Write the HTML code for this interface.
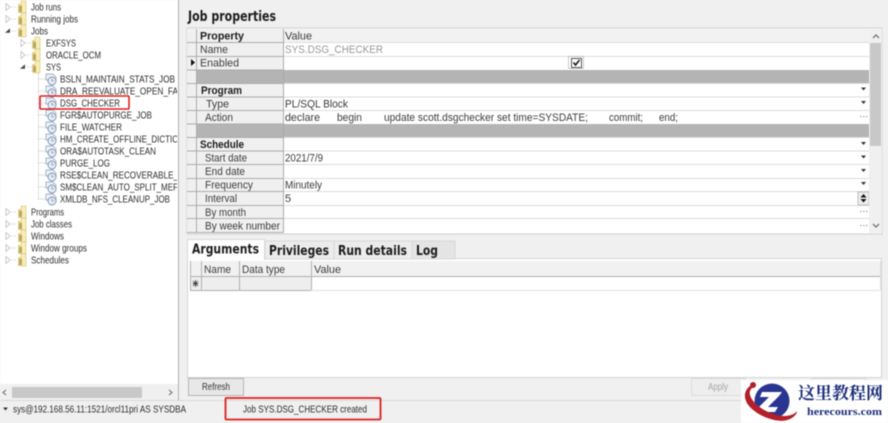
<!DOCTYPE html>
<html><head><meta charset="utf-8"><title>Job properties</title>
<style>
html,body{margin:0;padding:0;width:888px;height:423px;overflow:hidden;background:#f0f0f0}
svg{display:block;position:absolute;left:0;top:0}
text{font-family:"Liberation Sans",sans-serif;fill:#2c2c2c;font-size:10.5px}
.g text{font-size:11px;fill:#3c3c3c}
.b{font-weight:bold;fill:#1c1c1c!important}
.t{font-family:"DejaVu Sans",sans-serif;font-weight:bold;font-size:13px;fill:#1c1c1c}
</style></head><body>
<svg width="888" height="423" viewBox="0 0 888 423" xmlns="http://www.w3.org/2000/svg" style="filter:blur(.4px)">
<defs>
<clipPath id="tc"><rect x="0" y="0" width="177" height="384"/></clipPath>
<g id="fold"><path d="M-4-3h8v9h-8z" fill="#e6d587"/><path d="M-1-6h5v12h-5z" fill="#f6edb8" stroke="#cdb964" stroke-width=".5"/><path d="M-3-1h3v6h-3z" fill="#b9a765"/></g>
<g id="clock"><path d="M-5-5h7l3 3v3h-10z" fill="#eef2f8" stroke="#8a9bb5" stroke-width=".7"/><circle cx="1" cy="2" r="4" fill="#e6edf6" stroke="#7d92b0" stroke-width=".9"/><path d="M1-.5v2.500h2" fill="none" stroke="#5b7292" stroke-width=".6"/></g>
<path id="ar" d="M-2-3.500l4 3.500l-4 3.500z" fill="#fff" stroke="#b4b4b4" stroke-width=".7"/>
<path id="ex" d="M-3 1.800l5-4.400v4.400z" fill="#444"/>
<path id="dd" d="M-2.500-1h5l-2.500 3z" fill="#333"/>
</defs>

<rect width="888" height="423" fill="#f0f0f0"/>
<!-- tree -->
<rect x="0" y="0" width="178" height="400" fill="#fff"/>
<rect x="178" y="0" width="1" height="400" fill="#b0b0b0"/>
<g stroke="#cfcfcf" stroke-dasharray="1 1" fill="none" stroke-width="1">
<path d="M11 7h5M11 19h5M11 31h5M11 212h5M11 224h5M11 236h5M11 248h5M11 260h5"/>
<path d="M26 43h5M26 55h5M26 67h5"/>
</g>
<path d="M38.500 74v125M38 79h8M38 91h8M38 103h8M38 115h8M38 127h8M38 139h8M38 151h8M38 163h8M38 175h8M38 187h8M38 199h8" fill="none" stroke="#c0c0c0" stroke-dasharray="1 1"/>
<use href="#ar" x="8" y="7"/><use href="#ar" x="8" y="19"/><use href="#ex" x="8" y="31"/>
<use href="#ar" x="23" y="43"/><use href="#ar" x="23" y="55"/><use href="#ex" x="23" y="67"/>
<use href="#ar" x="8" y="212"/><use href="#ar" x="8" y="224"/><use href="#ar" x="8" y="236"/><use href="#ar" x="8" y="248"/><use href="#ar" x="8" y="260"/>
<use href="#fold" x="22" y="7"/><use href="#fold" x="22" y="19"/><use href="#fold" x="22" y="31"/>
<use href="#fold" x="36" y="43"/><use href="#fold" x="36" y="55"/><use href="#fold" x="36" y="67"/>
<use href="#fold" x="22" y="212"/><use href="#fold" x="22" y="224"/><use href="#fold" x="22" y="236"/><use href="#fold" x="22" y="248"/><use href="#fold" x="22" y="260"/>
<use href="#clock" x="51" y="79"/><use href="#clock" x="51" y="91"/><use href="#clock" x="51" y="103"/><use href="#clock" x="51" y="115"/><use href="#clock" x="51" y="127"/><use href="#clock" x="51" y="139"/><use href="#clock" x="51" y="151"/><use href="#clock" x="51" y="163"/><use href="#clock" x="51" y="175"/><use href="#clock" x="51" y="187"/><use href="#clock" x="51" y="199"/>
<g clip-path="url(#tc)">
<text x="31" y="10.500" textLength="30" lengthAdjust="spacingAndGlyphs">Job runs</text>
<text x="31" y="22.500" textLength="47" lengthAdjust="spacingAndGlyphs">Running jobs</text>
<text x="31" y="34.500" textLength="17" lengthAdjust="spacingAndGlyphs">Jobs</text>
<text x="46" y="46.500" textLength="30" lengthAdjust="spacingAndGlyphs">EXFSYS</text>
<text x="46" y="58.500" textLength="55" lengthAdjust="spacingAndGlyphs">ORACLE_OCM</text>
<text x="46" y="70.500" textLength="15" lengthAdjust="spacingAndGlyphs">SYS</text>
<text x="60" y="82.500" textLength="115" lengthAdjust="spacingAndGlyphs">BSLN_MAINTAIN_STATS_JOB</text>
<text x="60" y="94.500" textLength="118" lengthAdjust="spacingAndGlyphs">DRA_REEVALUATE_OPEN_FA</text>
<text x="60" y="106.500" textLength="60" lengthAdjust="spacingAndGlyphs">DSG_CHECKER</text>
<text x="60" y="118.500" textLength="92" lengthAdjust="spacingAndGlyphs">FGR$AUTOPURGE_JOB</text>
<text x="60" y="130.500" textLength="62" lengthAdjust="spacingAndGlyphs">FILE_WATCHER</text>
<text x="60" y="142.500" textLength="118" lengthAdjust="spacingAndGlyphs">HM_CREATE_OFFLINE_DICTIC</text>
<text x="60" y="154.500" textLength="96" lengthAdjust="spacingAndGlyphs">ORA$AUTOTASK_CLEAN</text>
<text x="60" y="166.500" textLength="50" lengthAdjust="spacingAndGlyphs">PURGE_LOG</text>
<text x="60" y="178.500" textLength="118" lengthAdjust="spacingAndGlyphs">RSE$CLEAN_RECOVERABLE_</text>
<text x="60" y="190.500" textLength="118" lengthAdjust="spacingAndGlyphs">SM$CLEAN_AUTO_SPLIT_MEF</text>
<text x="60" y="202.500" textLength="110" lengthAdjust="spacingAndGlyphs">XMLDB_NFS_CLEANUP_JOB</text>
<text x="31" y="215.500" textLength="33" lengthAdjust="spacingAndGlyphs">Programs</text>
<text x="31" y="227.500" textLength="41" lengthAdjust="spacingAndGlyphs">Job classes</text>
<text x="31" y="239.500" textLength="33" lengthAdjust="spacingAndGlyphs">Windows</text>
<text x="31" y="251.500" textLength="56" lengthAdjust="spacingAndGlyphs">Window groups</text>
<text x="31" y="263.500" textLength="38" lengthAdjust="spacingAndGlyphs">Schedules</text>
</g>
<rect x="40" y="96" width="89" height="13" rx="1" fill="none" stroke="#e01e1e" stroke-width="1.600"/>
<!-- tree scrollbar -->
<rect x="0" y="384" width="178" height="17" fill="#f0f0f0"/>
<rect x="12" y="387" width="130" height="11" fill="#c8c8c8"/>
<path d="M6 390l-3 2.500 3 2.500M169 390l3 2.500-3 2.500" fill="none" stroke="#666" stroke-width="1"/>

<!-- title -->
<text x="188" y="21" class="t" style="font-size:14px" textLength="88" lengthAdjust="spacingAndGlyphs">Job properties</text>

<!-- grid -->
<rect x="187" y="28" width="695" height="206" fill="#fff" stroke="#d0d0d0"/>
<rect x="187" y="29" width="97" height="204" fill="#f0f0f0"/>
<rect x="284" y="29" width="585" height="13" fill="#f2f2f2"/>
<rect x="196" y="70" width="673" height="13.500" fill="#b4b4b4"/>
<rect x="196" y="124" width="673" height="13.500" fill="#b4b4b4"/>
<g stroke="#ababab" fill="none" stroke-width="1">
<path d="M187 42.500H283.500M187 56.500H283.500M187 70H283.500M187 83.500H283.500M187 97H283.500M187 110.500H283.500M187 124H283.500M187 137.500H283.500M187 151H283.500M187 164.500H283.500M187 178.500H283.500M187 191.500H283.500M187 205.500H283.500M187 218.500H283.500M187 232.500H283.500"/>
<path d="M196.500 29V233M283.500 29V233"/>
</g>
<g stroke="#dcdcdc" fill="none" stroke-width="1">
<path d="M284 42.500H869M284 56.500H869M284 83.500H869M284 97H869M284 110.500H869M284 137.500H869M284 151H869M284 164.500H869M284 178.500H869M284 191.500H869M284 205.500H869M284 218.500H869"/>
</g>
<path d="M191 59l4 3.500-4 3.500z" fill="#111"/>
<g class="g">
<text x="200" y="39.500" class="b" textLength="44" lengthAdjust="spacingAndGlyphs">Property</text>
<text x="285" y="39.500" textLength="27" lengthAdjust="spacingAndGlyphs">Value</text>
<text x="200" y="53" textLength="28" lengthAdjust="spacingAndGlyphs">Name</text>
<text x="285" y="53" textLength="98" lengthAdjust="spacingAndGlyphs" style="fill:#999">SYS.DSG_CHECKER</text>
<text x="200" y="66.500" textLength="39" lengthAdjust="spacingAndGlyphs">Enabled</text>
<text x="201" y="94" class="b" textLength="41" lengthAdjust="spacingAndGlyphs">Program</text>
<text x="206" y="107.500" textLength="23" lengthAdjust="spacingAndGlyphs">Type</text>
<text x="285" y="107.500" textLength="63" lengthAdjust="spacingAndGlyphs">PL/SQL Block</text>
<text x="205" y="121" textLength="28" lengthAdjust="spacingAndGlyphs">Action</text>
<text x="285" y="121" textLength="35" lengthAdjust="spacingAndGlyphs">declare</text>
<text x="337" y="121" textLength="25" lengthAdjust="spacingAndGlyphs">begin</text>
<text x="384" y="121" textLength="204" lengthAdjust="spacingAndGlyphs">update scott.dsgchecker set time=SYSDATE;</text>
<text x="609" y="121" textLength="34" lengthAdjust="spacingAndGlyphs">commit;</text>
<text x="659" y="121" textLength="19" lengthAdjust="spacingAndGlyphs">end;</text>
<text x="200" y="148" class="b" textLength="44" lengthAdjust="spacingAndGlyphs">Schedule</text>
<text x="205" y="161.500" textLength="42" lengthAdjust="spacingAndGlyphs">Start date</text>
<text x="285" y="161.500" textLength="38" lengthAdjust="spacingAndGlyphs">2021/7/9</text>
<text x="205" y="175" textLength="40" lengthAdjust="spacingAndGlyphs">End date</text>
<text x="205" y="188.500" textLength="48" lengthAdjust="spacingAndGlyphs">Frequency</text>
<text x="285" y="188.500" textLength="37" lengthAdjust="spacingAndGlyphs">Minutely</text>
<text x="205" y="202" textLength="32" lengthAdjust="spacingAndGlyphs">Interval</text>
<text x="285" y="202">5</text>
<text x="205" y="216" textLength="41" lengthAdjust="spacingAndGlyphs">By month</text>
<text x="205" y="229.500" textLength="75" lengthAdjust="spacingAndGlyphs">By week number</text>
</g>
<!-- checkbox -->
<rect x="568.500" y="56.500" width="15" height="12" fill="none" stroke="#999" stroke-dasharray="1 1"/>
<rect x="571.500" y="58.500" width="10" height="9" fill="#fff" stroke="#555"/>
<path d="M573.500 62.500l2 2.500 4-5" fill="none" stroke="#111" stroke-width="1.500"/>
<!-- row buttons -->
<use href="#dd" x="863.500" y="88.500"/><use href="#dd" x="863.500" y="102"/><use href="#dd" x="863.500" y="143"/><use href="#dd" x="863.500" y="156.500"/><use href="#dd" x="863.500" y="170"/><use href="#dd" x="863.500" y="183"/>
<g fill="#999"><rect x="860" y="116" width="1.500" height="1"/><rect x="863" y="116" width="1.500" height="1"/><rect x="866" y="116" width="1.500" height="1"/><rect x="860" y="211" width="1.500" height="1"/><rect x="863" y="211" width="1.500" height="1"/><rect x="866" y="211" width="1.500" height="1"/><rect x="860" y="225" width="1.500" height="1"/><rect x="863" y="225" width="1.500" height="1"/><rect x="866" y="225" width="1.500" height="1"/></g>
<rect x="858" y="192" width="11" height="13" fill="#eee" stroke="#bbb"/>
<path d="M860.500 197.500h6l-3-3.500zM860.500 199h6l-3 3.500z" fill="#111"/>
<!-- grid scrollbar -->
<rect x="869" y="29" width="13" height="204" fill="#f0f0f0"/>
<rect x="870" y="43" width="11" height="103" fill="#c8c8c8"/>
<path d="M873 38l3-3 3 3M873 224l3 3 3-3" fill="none" stroke="#666" stroke-width="1.200"/>

<!-- tabs -->
<rect x="187.500" y="258.500" width="694" height="119" fill="#fff" stroke="#d4d4d4"/>
<rect x="265" y="241" width="69" height="18" fill="#ececec" stroke="#d8d8d8"/>
<rect x="334" y="241" width="78" height="18" fill="#ececec" stroke="#d8d8d8"/>
<rect x="412" y="241" width="43" height="18" fill="#e4e4e4" stroke="#d8d8d8"/>
<rect x="187.500" y="239.500" width="77" height="20" fill="#fff" stroke="#d8d8d8"/>
<rect x="188" y="257" width="76" height="4" fill="#fff"/>
<text x="192" y="253.500" class="t" textLength="67" lengthAdjust="spacingAndGlyphs">Arguments</text>
<text x="269" y="255" class="t" textLength="60" lengthAdjust="spacingAndGlyphs">Privileges</text>
<text x="338" y="255" class="t" textLength="69" lengthAdjust="spacingAndGlyphs">Run details</text>
<text x="416" y="255" class="t" textLength="22" lengthAdjust="spacingAndGlyphs">Log</text>
<!-- args grid -->
<rect x="190" y="261" width="690" height="15" fill="#f1f1f1"/>
<rect x="190" y="276" width="121" height="14" fill="#eee"/>
<g stroke="#b0b0b0" fill="none">
<path d="M190.500 261V290M201.500 261V290M239.500 261V290M311.500 261V290M190 276.500H880M190 290.500H311"/>
</g>
<path d="M311 290.500H880M880.500 261V290" stroke="#e0e0e0" fill="none"/>
<g class="g">
<text x="204" y="273" textLength="27" lengthAdjust="spacingAndGlyphs">Name</text>
<text x="242" y="273" textLength="43" lengthAdjust="spacingAndGlyphs">Data type</text>
<text x="314" y="273" textLength="27" lengthAdjust="spacingAndGlyphs">Value</text>
</g>
<path d="M195.500 280v7M192.500 283.500h6M193 281l5 5M198 281l-5 5" stroke="#333" stroke-width=".8"/>

<!-- buttons -->
<rect x="188.500" y="378.500" width="55" height="17" fill="#e8e8e8" stroke="#b4b4b4"/>
<text x="202" y="390" textLength="28" lengthAdjust="spacingAndGlyphs" style="fill:#333">Refresh</text>
<rect x="691.500" y="378.500" width="54" height="17" fill="#eeeeee" stroke="#dcdcdc"/>
<text x="708" y="390" textLength="20" lengthAdjust="spacingAndGlyphs" style="fill:#a5a5a5">Apply</text>
<rect x="812" y="378.500" width="54" height="17" fill="#eeeeee" stroke="#dcdcdc"/>

<!-- status bar -->
<rect x="0" y="401" width="888" height="22" fill="#f0f0f0"/>
<path d="M0 400.500H888" stroke="#d8d8d8"/>
<path d="M3 407.500h5l-2.500 3z" fill="#333"/>
<text x="13" y="412.500" textLength="173" lengthAdjust="spacingAndGlyphs">sys@192.168.56.11:1521/orcl11pri AS SYSDBA</text>
<text x="243" y="412.500" textLength="124" lengthAdjust="spacingAndGlyphs">Job SYS.DSG_CHECKER created</text>
<rect x="225.500" y="398" width="155" height="21.500" rx="1" fill="none" stroke="#e01e1e" stroke-width="1.800"/>

<!-- logo -->
<rect x="741" y="380" width="147" height="43" fill="#fff"/>
<circle cx="772" cy="401" r="17.500" fill="#29358f"/>
<path d="M762 392h20l-3 4-11 11h10l-3 5h-20l3-4 11-11h-9z" fill="#fff"/>
<path d="M750 386C742 392 744 402 752 409C762 418 780 424 790 419C794 417 797 414 797 411C793 416 785 417 777 415C764 412 752 403 750 395C749 391 751 388 754 387Z" fill="#b3202a"/>
<circle cx="753" cy="385" r="3" fill="#b3202a"/>
<text x="798" y="399" style="font-family:'Noto Serif CJK SC','Noto Sans CJK SC',serif;font-size:17px;font-weight:bold;fill:#1c2d7a" textLength="85" lengthAdjust="spacingAndGlyphs">这里教程网</text>
<text x="807" y="415" style="font-family:'Liberation Serif',serif;font-size:11px;font-weight:bold;fill:#1c2d7a" textLength="75" lengthAdjust="spacingAndGlyphs">herecours.com</text>
</svg>
</body></html>
